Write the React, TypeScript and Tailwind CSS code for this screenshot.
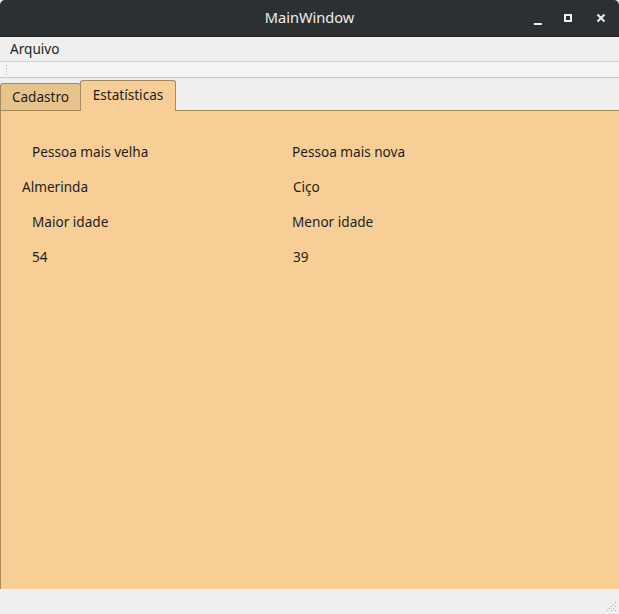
import React from 'react';

const font = { fontFamily: '"Noto Sans", "Open Sans", sans-serif' };

const App: React.FC = () => {
  return (
    <div className="w-[619px] h-[614px] flex flex-col bg-[#efefef] text-[13.6px] text-[#1e1e1e] overflow-hidden" style={font}>
      {/* Title bar */}
      <div className="h-[37px] shrink-0 bg-[#2c3033] rounded-t-[5px] flex items-center relative border-b border-[#1f2224]">
        <div className="flex-1 text-center text-[14.6px] text-[#eeeeec]">MainWindow</div>
        <div className="absolute right-0 top-0 h-full flex items-center">
          <div className="w-[30px] flex justify-center items-end h-[14px]">
            <div className="w-[8px] h-[2px] bg-[#eeeeec]" />
          </div>
          <div className="w-[30px] flex justify-center">
            <div className="w-[8px] h-[8px] border-2 border-[#eeeeec]" />
          </div>
          <div className="w-[36px] flex justify-center text-[#eeeeec]">
            <svg width="10" height="10" viewBox="0 0 10 10">
              <path d="M1.5 1.5 L8.5 8.5 M8.5 1.5 L1.5 8.5" stroke="#eeeeec" strokeWidth="2" />
            </svg>
          </div>
        </div>
      </div>

      {/* Menu bar */}
      <div className="h-[25px] shrink-0 flex items-center px-[10px] border-b border-[#d6d6d6]">
        <span>Arquivo</span>
      </div>

      {/* Toolbar */}
      <div className="h-[16px] shrink-0 bg-[#f4f4f4] border-b border-[#c9c9c9] flex items-center pl-[5px]">
        <div className="w-[3px] h-[12px] bg-[radial-gradient(#aaa_0.7px,transparent_0.8px)] bg-[length:3px_3px]" />
      </div>

      {/* Tabs */}
      <div className="flex items-end h-[31px] shrink-0 mt-[1px] relative">
        <div className="h-[27px] w-[81px] bg-[#e8c38c] border border-b-0 border-[#a8895a] rounded-t-[3px] flex items-center justify-center">
          Cadastro
        </div>
        <div className="h-[31px] w-[96px] bg-[#f6ce96] border border-b-0 border-[#a8895a] rounded-t-[3px] flex items-center justify-center -ml-[1px] relative z-10 -mb-[1px] pb-[1px]">
          Estatísticas
        </div>
      </div>

      {/* Pane */}
      <div className="flex-1 bg-[#f6ce96] border-t border-l border-[#a88a5a] flex flex-col">
        <div className="grid grid-cols-[260px_1fr] pt-[24px]">
          <div className="pl-[31px] h-[34px] flex items-center">Pessoa mais velha</div>
          <div className="pl-[31px] h-[34px] flex items-center">Pessoa mais nova</div>
          <div className="pl-[21px] h-[36px] flex items-center">Almerinda</div>
          <div className="pl-[32px] h-[36px] flex items-center">Ciço</div>
          <div className="pl-[31px] h-[34px] flex items-center">Maior idade</div>
          <div className="pl-[31px] h-[34px] flex items-center">Menor idade</div>
          <div className="pl-[31px] h-[36px] flex items-center">54</div>
          <div className="pl-[32px] h-[36px] flex items-center">39</div>
        </div>
      </div>

      {/* Status bar */}
      <div className="h-[25px] shrink-0 bg-[#efefef] border-t border-[#f7ecdc] flex justify-end items-end pr-[2px] pb-[2px]">
        <svg width="12" height="12" viewBox="0 0 12 12">
          {[
            [10, 2], [10, 6], [10, 10], [6, 6], [6, 10], [2, 10], [8, 4], [8, 8], [4, 8],
          ].map(([x, y], i) => (
            <rect key={i} x={x} y={y} width="1" height="1" fill="#b0b0b0" />
          ))}
        </svg>
      </div>
    </div>
  );
};

export default App;
